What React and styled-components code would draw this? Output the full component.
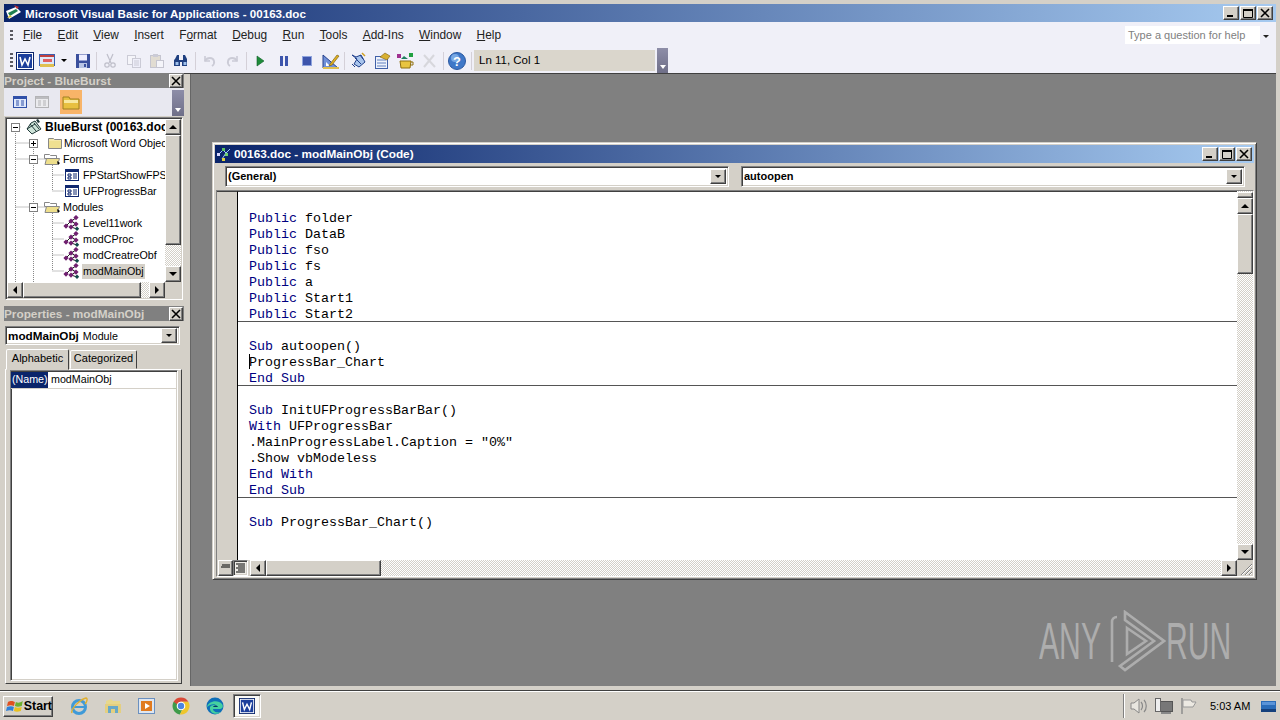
import React from "react";
import styled, { createGlobalStyle, css } from "styled-components";

const GlobalStyle = createGlobalStyle`
  html, body { margin: 0; padding: 0; }
  body { width: 1280px; height: 720px; overflow: hidden; background: #d4d0c8; }
  * { box-sizing: border-box; }
`;

const raised = css`
  border: 1px solid;
  border-color: #fff #404040 #404040 #fff;
  box-shadow: inset -1px -1px #808080;
`;
const sunken = css`
  border: 1px solid;
  border-color: #808080 #fff #fff #808080;
  box-shadow: inset 1px 1px #404040, inset -1px -1px #d4d0c8;
`;
const dither = css`
  background: repeating-conic-gradient(#d4d0c8 0 25%, #fff 0 50%) 0 0 / 2px 2px;
`;

const Page = styled.div`
  width: 1280px;
  height: 720px;
  display: flex;
  flex-direction: column;
  background: #d4d0c8;
  font-family: "Liberation Sans", Arial, sans-serif;
  font-size: 12px;
  color: #000;
  overflow: hidden;
`;
const AppWindow = styled.div`
  height: 692px;
  flex: none;
  margin-top: -1px;
  padding: 4px 4px 4px;
  display: flex;
  flex-direction: column;
  border-top: 1px solid #fff;
  border-bottom: 1px solid #404040;
`;
const TitleBar = styled.div`
  height: 18px;
  flex: none;
  display: flex;
  align-items: center;
  gap: 2px;
  padding: 0 ${({ $pr }) => $pr}px 0 1px;
  background: linear-gradient(90deg, #0a246a, #a6caf0);
`;
const TitleText = styled.span`
  flex: 1;
  color: #fff;
  font-weight: bold;
  font-size: ${({ $size }) => $size}px;
  white-space: nowrap;
`;
const WinButtons = styled.div`
  display: flex;
  gap: ${({ $gap }) => $gap}px;
`;
const WinButton = styled.div`
  width: 16px;
  height: 14px;
  background: #d4d0c8;
  ${raised};
  display: flex;
  align-items: center;
  justify-content: center;
`;
const MenuBar = styled.div`
  height: 26px;
  flex: none;
  display: flex;
  align-items: center;
  gap: 15.3px;
  padding: 0 0 0 6px;
  background: #f0f0f8;
  font-size: 11.9px;
`;
const Grip = styled.div`
  width: 3px;
  flex: none;
  height: ${({ $h }) => $h}px;
  background: repeating-linear-gradient(180deg, #5a5a62 0 2px, transparent 2px 4px);
  margin-right: ${({ $mr }) => $mr}px;
`;
const MenuItem = styled.span`
  white-space: nowrap;
  color: #222;
`;
const HelpBox = styled.div`
  margin-left: auto;
  width: 135px;
  height: 18px;
  background: #fff;
  color: #808080;
  padding-left: 3px;
  line-height: 18px;
  font-size: 11px;
`;
const HelpArrow = styled.div`
  width: 0;
  height: 0;
  margin: 2px 7px 0 -12.3px;
  border: 3px solid transparent;
  border-top: 3px solid #222;
  border-bottom: 0;
`;
const ToolBar = styled.div`
  height: 25px;
  flex: none;
  display: flex;
  align-items: center;
  padding-left: 6px;
  background: #f0f0f8;
`;
const ToolButton = styled.div`
  width: ${({ $w }) => $w || 23.5}px;
  height: 22px;
  flex: none;
  display: flex;
  align-items: center;
  justify-content: center;
  opacity: ${({ $off }) => ($off ? 0.35 : 1)};
`;
const ToolSep = styled.div`
  width: 1px;
  height: 18px;
  flex: none;
  margin: 0 ${({ $m }) => $m ?? 3}px;
  background: #d4d0d8;
`;
const PositionBox = styled.div`
  width: 181px;
  height: 21px;
  flex: none;
  background: #dad6cc;
  padding-left: 5px;
  line-height: 21px;
  font-size: 11.5px;
`;
const ChevronEnd = styled.div`
  width: 11px;
  height: 25px;
  flex: none;
  margin-left: 2px;
  background: linear-gradient(180deg, #8e8ea8, #6f6f88);
  position: relative;
  &::after {
    content: "";
    position: absolute;
    left: 3px;
    bottom: 4px;
    border: 3px solid transparent;
    border-top: 4px solid #fff;
    border-bottom: 0;
  }
`;
const Main = styled.div`
  flex: 1;
  min-height: 0;
  display: flex;
  border-top: 1px solid #404040;
`;
const Sidebar = styled.div`
  width: 180px;
  flex: none;
  margin-top: -1px;
  display: flex;
  flex-direction: column;
`;
const Workspace = styled.div`
  flex: 1;
  margin-left: 6px;
  background: #808080;
  border-left: 1px solid #666;
  position: relative;
`;
const PanelTitle = styled.div`
  height: 15px;
  flex: none;
  display: flex;
  align-items: center;
  justify-content: space-between;
  padding-right: 1px;
  background: #808080;
  color: #d4d0c8;
  font-weight: bold;
  font-size: 11.8px;
`;
const PanelClose = styled.div`
  width: 14px;
  height: 14px;
  background: #d4d0c8;
  ${raised};
  display: flex;
  align-items: center;
  justify-content: center;
`;
const ProjectBar = styled.div`
  height: 28px;
  flex: none;
  display: flex;
  align-items: center;
  padding-left: 5px;
  background: #e8e8f0;
  position: relative;
`;
const ProjectButton = styled.div`
  width: 22px;
  height: ${({ $active }) => ($active ? 24 : 22)}px;
  margin-left: ${({ $active }) => ($active ? 7 : 0)}px;
  display: flex;
  align-items: center;
  justify-content: center;
  background: ${({ $active }) => ($active ? "#f8b468" : "transparent")};
  opacity: ${({ $off }) => ($off ? 0.55 : 1)};
`;
const ProjectChevron = styled(ChevronEnd)`
  position: absolute;
  right: 0;
  top: 2px;
  width: 12px;
  height: 26px;
  margin: 0;
`;
const TreePanel = styled.div`
  height: 183px;
  flex: none;
  margin: 1px 1px 0 1px;
  ${sunken};
  padding: 1px;
  position: relative;
  display: grid;
  grid-template-columns: 1fr 16px;
  grid-template-rows: 1fr 16px;
  background: #fff;
`;
const TreeBody = styled.div`
  overflow: hidden;
  position: relative;
`;
const TreeLines = styled.svg`
  position: absolute;
  left: 0;
  top: 0;
`;
const TreeRow = styled.div`
  position: relative;
  height: 16px;
  display: flex;
  align-items: center;
  white-space: nowrap;
  padding-left: ${({ $level }) => [4, 22, 56][$level]}px;
  font-weight: ${({ $root }) => ($root ? "bold" : "normal")};
  font-size: ${({ $root }) => ($root ? 12 : 10.7)}px;
`;
const Expander = styled.div`
  width: 9px;
  height: 9px;
  flex: none;
  border: 1px solid #808080;
  background: #fff;
  margin-right: ${({ $mr }) => $mr}px;
  position: relative;
  &::before {
    content: "";
    position: absolute;
    left: 1px;
    top: 3px;
    width: 5px;
    height: 1px;
    background: #000;
  }
  ${({ $plus }) =>
    $plus &&
    css`
      &::after {
        content: "";
        position: absolute;
        left: 3px;
        top: 1px;
        width: 1px;
        height: 5px;
        background: #000;
      }
    `}
`;
const TreeIcon = styled.div`
  width: 18px;
  height: 16px;
  flex: none;
  margin-right: ${({ $mr }) => $mr ?? 2}px;
  display: flex;
  align-items: center;
  justify-content: center;
`;
const TreeLabel = styled.span`
  padding: 0 1px;
  margin-left: -1px;
  line-height: 15px;
  background: ${({ $selected }) => ($selected ? "#d4d0c8" : "transparent")};
`;
const ScrollV = styled.div`
  display: flex;
  flex-direction: column;
  ${dither};
`;
const ScrollH = styled.div`
  display: flex;
  ${dither};
`;
const ScrollButton = styled.div`
  width: ${({ $w }) => $w || 16}px;
  height: ${({ $h }) => $h || 16}px;
  flex: none;
  background: #d4d0c8;
  ${raised};
  display: flex;
  align-items: center;
  justify-content: center;
`;
const Arrow = styled.div`
  width: 0;
  height: 0;
  border: ${({ $size }) => $size || 4}px solid transparent;
  ${({ $dir }) =>
    ({
      up: "border-bottom-color: #000; border-top: 0;",
      down: "border-top-color: #000; border-bottom: 0;",
      left: "border-right-color: #000; border-left: 0;",
      right: "border-left-color: #000; border-right: 0;",
    })[$dir]}
`;
const Thumb = styled.div`
  flex: none;
  width: ${({ $w }) => ($w ? `${$w}px` : "100%")};
  height: ${({ $h }) => ($h ? `${$h}px` : "100%")};
  background: #d4d0c8;
  ${raised};
`;
const Spacer = styled.div`
  flex: 1;
`;
const Corner = styled.div`
  background: #d4d0c8;
`;
const PropsPanel = styled.div`
  flex: 1;
  min-height: 0;
  margin-top: 6px;
  display: flex;
  flex-direction: column;
`;
const Combo = styled.div`
  height: 19px;
  flex: none;
  margin: 5px 4px 0 1px;
  ${sunken};
  background: #fff;
  display: flex;
  align-items: center;
  justify-content: space-between;
  padding: 0 2px 0 2px;
  white-space: nowrap;
`;
const ComboText = styled.span`
  font-weight: ${({ $bold }) => ($bold ? "bold" : "normal")};
  font-size: ${({ $bold }) => ($bold ? 11.7 : 10.7)}px;
  margin-right: ${({ $bold }) => ($bold ? 4 : 0)}px;
`;
const ComboLabel = styled.div`
  flex: 1;
`;
const ComboButton = styled(ScrollButton)`
  width: 16px;
  height: 15px;
`;
const Tabs = styled.div`
  height: 21px;
  flex: none;
  margin-top: 3px;
  padding-left: 2px;
  display: flex;
  align-items: flex-end;
`;
const Tab = styled.div`
  height: ${({ $active }) => ($active ? 21 : 19)}px;
  width: ${({ $w }) => $w}px;
  padding-top: ${({ $active }) => ($active ? 1 : 0)}px;
  margin-left: ${({ $active }) => ($active ? 0 : 1)}px;
  text-align: center;
  font-size: 11px;
  line-height: 14px;
  background: #d4d0c8;
  border: 1px solid;
  border-color: #fff #404040 transparent #fff;
  border-radius: 2px 2px 0 0;
  position: relative;
  ${({ $active }) => $active && "margin-bottom: -1px; z-index: 1;"}
`;
const TabPanel = styled.div`
  flex: 1;
  min-height: 0;
  margin: 0 2px 2px 1px;
  padding: 0 3px 2px 4px;
  border: 1px solid;
  border-color: #fff #404040 #404040 #fff;
`;
const PropGrid = styled.div`
  height: 100%;
  background: #fff;
  ${sunken};
  padding: 1px 0 0;
`;
const PropRow = styled.div`
  height: 17px;
  display: grid;
  grid-template-columns: 37px 1fr;
  border-bottom: 1px solid #d4d0c8;
  font-size: 10.7px;
  line-height: 15px;
`;
const PropName = styled.div`
  background: #0a246a;
  color: #fff;
  padding-left: 1px;
`;
const PropValue = styled.div`
  padding-left: 3px;
`;

/* code window */
const CodeWindow = styled.div`
  position: absolute;
  left: 21px;
  top: 68px;
  width: 1045px;
  height: 438px;
  background: #d4d0c8;
  border: 1px solid;
  border-color: #d4d0c8 #404040 #404040 #d4d0c8;
  box-shadow: inset 1px 1px #fff, inset -1px -1px #808080;
  padding: 2px;
  display: flex;
  flex-direction: column;
`;
const ComboRow = styled.div`
  height: 27px;
  flex: none;
  display: grid;
  grid-template-columns: 504px 504px;
  gap: 12px;
  padding: 3px 0 3px 10px;
`;
const CodeCombo = styled(Combo)`
  height: 21px;
  margin: 0;
  font-weight: bold;
  font-size: 11px;
  padding-bottom: 1px;
`;
const CodeFrame = styled.div`
  flex: 1;
  min-height: 0;
  margin-left: 1px;
  ${sunken};
  display: grid;
  grid-template-columns: 21px 1fr 16px;
  grid-template-rows: 1fr 16px;
`;
const MarginBar = styled.div`
  background: #d4d0c8;
  border-right: 1px solid #000;
  border-top: 1px solid #404040;
`;
const CodeArea = styled.div`
  background: #fff;
  overflow: hidden;
  padding-top: 2px;
  border-top: 1px solid #404040;
  font-family: "Liberation Mono", "Courier New", monospace;
  font-size: 13.33px;
  color: #000;
`;
const CodeLine = styled.div`
  height: 16px;
  line-height: 18px;
  padding-left: 11px;
  white-space: pre;
  ${({ $sep }) => $sep && "box-shadow: inset 0 -1px #555;"}
`;
const Keyword = styled.span`
  color: #000080;
`;
const Caret = styled.span`
  display: inline-block;
  width: 1px;
  height: 15px;
  margin-right: -1px;
  vertical-align: top;
  background: #000;
`;
const SplitStub = styled.div`
  height: 6px;
  flex: none;
  margin-top: 1px;
  background: #d4d0c8;
  ${raised};
`;
const ViewButtons = styled.div`
  grid-column: 1;
  display: flex;
  background: #d4d0c8;
  margin-right: -12px;
  position: relative;
  z-index: 1;
  padding-left: 1px;
`;
const ViewButton = styled.div`
  width: 15px;
  height: 16px;
  flex: none;
  display: flex;
  align-items: center;
  justify-content: center;
  ${({ $on }) => ($on ? sunken : raised)};
  background: ${({ $on }) => ($on ? "#f0eee8" : "#d4d0c8")};
`;
const CodeHScroll = styled(ScrollH)`
  padding-left: 12px;
`;
const ResizeGrip = styled.div`
  background: #d4d0c8;
  display: flex;
  align-items: flex-end;
  justify-content: flex-end;
`;
const Watermark = styled.div`
  position: absolute;
  right: 47px;
  bottom: 14px;
  display: flex;
  align-items: center;
  gap: 5px;
  color: #adadad;
  font-size: 52px;
  line-height: 60px;
`;
const WatermarkWord = styled.span`
  display: block;
  width: 63px;
  white-space: nowrap;
  transform: scaleX(0.58);
  transform-origin: left center;
`;
const LogoSlot = styled.div`
  display: flex;
  margin: 0 -5px 0 3px;
`;

/* taskbar */
const Taskbar = styled.div`
  flex: 1;
  display: flex;
  align-items: center;
  padding: 0 0 0 3px;
  border-top: 1px solid #fff;
  background: #d4d0c8;
`;
const StartButton = styled.div`
  width: 50px;
  height: 21px;
  ${raised};
  display: flex;
  align-items: center;
  padding-left: 2px;
  font-weight: bold;
  font-size: 12.4px;
  margin-right: 9px;
`;
const TaskIcon = styled.div`
  width: 34px;
  height: 24px;
  flex: none;
  display: flex;
  align-items: center;
  justify-content: center;
`;
const TaskActive = styled.div`
  width: 28px;
  height: 24px;
  flex: none;
  margin-left: 1px;
  background: #fbfaf6;
  ${sunken};
  display: flex;
  align-items: center;
  justify-content: center;
`;
const Tray = styled.div`
  margin-left: auto;
  width: 157px;
  height: 24px;
  display: flex;
  align-items: center;
  padding-left: 5px;
  gap: 5px;
  border-left: 1px solid #808080;
  box-shadow: inset 1px 0 #fff;
`;
const Clock = styled.span`
  margin: 0 6px;
  font-size: 11px;
  white-space: nowrap;
`;

/* drawings */
const Svg = ({ s = 16, w, h, children }) => (
  <svg width={w || s} height={h || s} viewBox={`0 0 ${w || s} ${h || s}`}>
    {children}
  </svg>
);
const WordIcon = ({ s = 18 }) => (
  <svg width={s} height={s} viewBox="0 0 18 18">
    <rect x="0.5" y="0.5" width="17" height="17" fill="#fff" stroke="#0a246a" />
    <rect x="2" y="2" width="14" height="14" fill="#1c3f9c" />
    <path d="M4 5l2 8 3-6 3 6 2-8" fill="none" stroke="#fff" strokeWidth="1.6" />
  </svg>
);
const ViewDocIcon = () => (
  <Svg w={16} h={16}>
    <rect x="0.5" y="1.5" width="15" height="11" fill="#dfe8f8" stroke="#3a5fb0" />
    <rect x="1" y="2" width="14" height="2" fill="#c04040" />
    <rect x="4" y="6" width="9" height="3" fill="#e06060" />
    <rect x="1" y="11" width="14" height="3" fill="#e0c050" />
  </Svg>
);
const SaveIcon = () => (
  <Svg>
    <path d="M1 1h14v14H1z" fill="#3a4f9c" />
    <rect x="4" y="1.5" width="8" height="6" fill="#eef" />
    <rect x="4" y="10" width="8" height="5" fill="#b8c4e4" />
    <rect x="9" y="11" width="2" height="3" fill="#3a4f9c" />
  </Svg>
);
const CutIcon = () => (
  <Svg>
    <path d="M5 1l4 9M11 1L7 10" stroke="#667" strokeWidth="1.2" fill="none" />
    <circle cx="5" cy="12" r="2.2" fill="none" stroke="#667" strokeWidth="1.2" />
    <circle cx="11" cy="12" r="2.2" fill="none" stroke="#667" strokeWidth="1.2" />
  </Svg>
);
const CopyIcon = () => (
  <Svg>
    <rect x="1.5" y="2.5" width="8" height="9" fill="#fff" stroke="#889" />
    <rect x="6.5" y="5.5" width="8" height="9" fill="#eef" stroke="#889" />
    <path d="M8 8h5M8 10h5M8 12h5" stroke="#889" />
  </Svg>
);
const PasteIcon = () => (
  <Svg>
    <rect x="1.5" y="2.5" width="10" height="12" fill="#c8b88c" stroke="#778" />
    <rect x="4" y="1" width="5" height="3" fill="#889" />
    <rect x="7.5" y="7.5" width="7" height="7" fill="#fff" stroke="#778" />
  </Svg>
);
const FindIcon = () => (
  <Svg>
    <path d="M2 6l2-4h2v5h4V2h2l2 4v7H9V9H7v4H1V7z" fill="#1f3f80" />
    <rect x="2.5" y="9" width="3" height="3" fill="#9fc0ea" />
    <rect x="10.5" y="9" width="3" height="3" fill="#9fc0ea" />
  </Svg>
);
const UndoIcon = ({ flip }) => (
  <Svg>
    <g transform={flip ? "translate(16 0) scale(-1 1)" : undefined}>
      <path d="M4 3v5h5" fill="none" stroke="#889" strokeWidth="1.6" />
      <path d="M4 8c2-4 8-4 9 0 .5 2-.5 4-2 5" fill="none" stroke="#889" strokeWidth="1.8" />
    </g>
  </Svg>
);
const PlayIcon = () => (
  <Svg>
    <path d="M5 3l7 5-7 5z" fill="#1e8c3a" stroke="#10602a" strokeWidth=".6" />
  </Svg>
);
const PauseIcon = () => (
  <Svg>
    <rect x="4" y="3" width="3" height="10" fill="#3d55ac" />
    <rect x="9" y="3" width="3" height="10" fill="#3d55ac" />
  </Svg>
);
const StopIcon = () => (
  <Svg>
    <rect x="3.5" y="3.5" width="9" height="9" fill="#3d55ac" stroke="#8fa4de" />
  </Svg>
);
const DesignIcon = () => (
  <Svg w={18} h={18}>
    <path d="M1 3v13h15z" fill="#7090d8" stroke="#24408c" />
    <path d="M4 10v4h4z" fill="#fff" />
    <path d="M8 12l7-9 2 1-7 9-3 1z" fill="#e0b020" stroke="#70580c" strokeWidth=".6" />
    <rect x="1" y="15" width="16" height="2" fill="#e0c050" />
  </Svg>
);
const ProjectExplorerIcon = () => (
  <Svg w={18} h={18}>
    <path d="M3 3l5 4-3 5 5 3 6-5-4-7-5 2z" fill="#a8c4ec" stroke="#20408c" />
    <path d="M3 12l3 3M11 3l3 4M6 6l6 6" stroke="#20408c" fill="none" />
    <path d="M13 1l3 3" stroke="#d0a020" strokeWidth="1.5" />
  </Svg>
);
const PropertiesIcon = () => (
  <Svg w={18} h={18}>
    <rect x="2.5" y="4.5" width="12" height="12" fill="#eef2fb" stroke="#4060a8" />
    <path d="M4 8h9M4 11h9M4 14h9" stroke="#6080c0" />
    <path d="M7 5l5-4 5 3-3 4z" fill="#d8b030" stroke="#806010" strokeWidth=".6" />
  </Svg>
);
const ObjectBrowserIcon = () => (
  <Svg w={18} h={18}>
    <rect x="1" y="2" width="4" height="4" fill="#a03090" />
    <rect x="13" y="1" width="4" height="4" fill="#20a040" />
    <path d="M8 4l-3 3h7z" fill="#208060" />
    <path d="M4 9h11l-1 7H5z" fill="#e8c440" stroke="#907010" />
    <path d="M15 10h2v3h-2" fill="none" stroke="#907010" />
  </Svg>
);
const ToolsIcon = () => (
  <Svg>
    <path d="M3 2l11 12M13 2L3 14" stroke="#aaa" strokeWidth="2" />
  </Svg>
);
const HelpIcon = () => (
  <Svg w={18} h={18}>
    <circle cx="9" cy="9" r="8.5" fill="#3f78c8" stroke="#2a58a0" />
    <circle cx="7" cy="6" r="4" fill="#78a8e4" />
    <text x="9" y="13.5" fontSize="13" fontWeight="bold" textAnchor="middle" fill="#fff" fontFamily="Liberation Sans">
      ?
    </text>
  </Svg>
);
const ClassIcon = ({ off }) => (
  <Svg>
    <rect x="1.5" y="2.5" width="13" height="11" fill={off ? "#eee" : "#dfe8fb"} stroke={off ? "#888" : "#3050a8"} />
    <rect x="2" y="3" width="12" height="2" fill={off ? "#999" : "#3050a8"} />
    <path d="M4 7h3M4 9h3M4 11h3M9 7h3M9 9h3M9 11h3" stroke={off ? "#888" : "#3050a8"} />
  </Svg>
);
const FolderBig = () => (
  <Svg w={18} h={16}>
    <path d="M1 3h6l1 2h9v10H1z" fill="#e8c040" stroke="#a08020" />
    <rect x="2" y="6" width="14" height="3" fill="#f8e8a0" />
  </Svg>
);
const FolderClosed = () => (
  <Svg w={16} h={16}>
    <path d="M1.5 3.5h5l1 1h7v9h-13z" fill="#f5e8a8" stroke="#888" />
    <path d="M2 6h12v7H2z" fill="#efe090" />
  </Svg>
);
const FolderOpen = () => (
  <Svg w={18} h={16}>
    <path d="M1.5 3.5h5l1 1h6v3h-12z" fill="#fff" stroke="#888" />
    <path d="M2 13.5l1.5-6h13l-2 6z" fill="#eedf8c" stroke="#888" />
    <path d="M14 10l3 2-2 2" fill="#000" />
  </Svg>
);
const FormIcon = () => (
  <Svg>
    <rect x="1.5" y="2.5" width="13" height="11" fill="#fff" stroke="#102870" />
    <rect x="2" y="3" width="12" height="2" fill="#102870" />
    <path d="M4 7h3v2H4zM4 10h3v2H4z" fill="none" stroke="#102870" />
    <path d="M9 7h4M9 9h4M9 11h4" stroke="#102870" />
  </Svg>
);
const ModuleIcon = () => (
  <Svg w={18} h={16}>
    <path d="M3 11l5-5 5-3M8 6l5 3M8 12l5-3M8 12l6 2" stroke="#222" fill="none" />
    <path d="M13 0l2.6 2.6L13 5.2l-2.6-2.6zM8 3.5l2.6 2.6L8 8.7 5.4 6.1zM13 6.5l2.6 2.6-2.6 2.6-2.6-2.6z" fill="#702070" />
    <path d="M3 8.5l2.6 2.6L3 13.7.4 11.1zM8 9.5l2.6 2.6L8 14.7l-2.6-2.6z" fill="#702070" />
    <path d="M14 11.5l2.2 2.2-2.2 2.2-2.2-2.2z" fill="#104848" />
  </Svg>
);
const ProjectTreeIcon = () => (
  <Svg w={18} h={16}>
    <path d="M2 10l5 5 9-5-6-8-4 2z" fill="#cde3d8" stroke="#203838" />
    <path d="M5 5l6 7M9 4l5 6M2 10l8-5" stroke="#203838" fill="none" />
    <path d="M11 1l2-1 2 3-2 1z" fill="#203838" />
  </Svg>
);
const CodeWindowIcon = () => (
  <Svg>
    <path d="M2 9l5-5 3 3 4-4M6 13l4-6" stroke="#9ec8ff" fill="none" />
    <rect x="6" y="2" width="3" height="3" fill="#5cc060" />
    <rect x="1" y="7" width="3" height="3" fill="#d8d8ff" />
    <rect x="9" y="7" width="3" height="3" fill="#70d070" />
    <rect x="6" y="12" width="3" height="3" fill="#e0d040" />
  </Svg>
);
const AppTitleIcon = () => (
  <Svg w={18} h={18}>
    <path d="M1 7l10-4 5 5-12 7z" fill="#fff" />
    <path d="M3 9l8-4 2 2-8 5z" fill="#208050" />
    <path d="M9 1l5 2-2 2z" fill="#c03030" />
    <path d="M2 14l3-3 2 2z" fill="#e0c030" />
  </Svg>
);
const MinGlyph = () => (
  <Svg w={10} h={10}>
    <rect x="1" y="7" width="6" height="2" fill="#000" />
  </Svg>
);
const MaxGlyph = () => (
  <Svg w={10} h={10}>
    <path d="M0.5 1.5h9v8h-9z" fill="none" stroke="#000" />
    <rect x="0" y="1" width="10" height="2" fill="#000" />
  </Svg>
);
const CloseGlyph = () => (
  <Svg w={10} h={10}>
    <path d="M1 1l8 8M9 1l-8 8" stroke="#000" strokeWidth="1.6" />
  </Svg>
);
const ViewLinesIcon = ({ full }) => (
  <Svg w={11} h={10}>
    <path d={full ? "M1 1h9M3 3h7M1 5h9M3 7h7M1 9h9" : "M2 2h8M1 4h9"} stroke="#000" fill="none" />
  </Svg>
);
const GripLines = () => (
  <Svg w={14} h={14}>
    <path d="M13 2L2 13M13 6l-7 7M13 10l-3 3" stroke="#808080" fill="none" />
    <path d="M13 3L3 13M13 7l-6 6M13 11l-2 2" stroke="#fff" fill="none" />
  </Svg>
);
const LogoMark = () => (
  <svg width="56" height="62" viewBox="0 0 56 62">
    <g fill="none" stroke="#adadad" strokeWidth="2.6">
      <path d="M2 52V12c0-3 2-5 5-5" />
      <path d="M15 2l39 29-39 29-5-4 34-25L15 10z" />
      <path d="M17 18l19 13-19 13z" />
    </g>
  </svg>
);
const WindowsFlag = () => (
  <Svg w={18} h={16}>
    <path d="M2 4c3-2 5-1 7 0L8 8C6 7 4 7 1 8z" fill="#e05020" />
    <path d="M10 4c2 1 4 1 7-1l-1 5c-3 1-5 1-7 0z" fill="#6cb030" />
    <path d="M1 9c3-1 5-1 7 0l-1 4c-2-1-4-1-7 0z" fill="#3080d8" />
    <path d="M9 9c2 1 4 1 7 0l-1 4c-3 1-5 1-7 0z" fill="#e8c020" />
  </Svg>
);
const IeIcon = () => (
  <Svg w={20} h={20}>
    <circle cx="10" cy="11" r="6.5" fill="none" stroke="#3f9ad8" strokeWidth="3" />
    <path d="M5 11h10" stroke="#3f9ad8" strokeWidth="2" />
    <path d="M3 17C1 13 12 3 17 2c2 0 1 4-1 6" fill="none" stroke="#e0b030" strokeWidth="1.4" />
  </Svg>
);
const ExplorerIcon = () => (
  <Svg w={20} h={20}>
    <path d="M3 5l5-2 2 2h7v3H3z" fill="#e8d88c" />
    <path d="M2 8h16v9H2z" fill="#e4cf80" />
    <path d="M5 10h10v7h-3v-4H8v4H5z" fill="#68a8c8" />
  </Svg>
);
const PlayerIcon = () => (
  <Svg w={20} h={20}>
    <rect x="1.5" y="2.5" width="16" height="15" fill="#dfe6f0" stroke="#6a90c0" />
    <rect x="4" y="5" width="11" height="10" fill="#e07a20" />
    <path d="M8 7l5 3-5 3z" fill="#fff" />
  </Svg>
);
const ChromeIcon = () => (
  <Svg w={20} h={20}>
    <path d="M10 1.5a8.5 8.5 0 0 1 7.4 4.3H10z" fill="#d94a38" />
    <path d="M2.6 5.8A8.5 8.5 0 0 1 10 1.5v4.3a4.2 4.2 0 0 0-3.7 6.4L5 14z" fill="#d94a38" />
    <path d="M2.6 5.8a8.5 8.5 0 0 0 6.3 12.6l3-6z" fill="#3f9b4a" />
    <path d="M17.4 5.8H10l2 6.6-3.1 6A8.5 8.5 0 0 0 17.4 5.8z" fill="#eec62c" />
    <circle cx="10" cy="10" r="4.3" fill="#fff" />
    <circle cx="10" cy="10" r="3.2" fill="#4a85e0" />
  </Svg>
);
const EdgeIcon = () => (
  <Svg w={20} h={20}>
    <circle cx="10" cy="10" r="8.5" fill="#0f6fb8" />
    <path d="M2 11C3 5 13 3 17 8c2 3 0 5-3 5H8c0 3 5 4 8 3-5 4-12 1-11-5 1-2 5-3 7-1-2-3-7-2-10 1z" fill="#45d0a0" />
    <path d="M8 11c1-2 4-2 5 0z" fill="#083868" />
  </Svg>
);
const SpeakerIcon = () => (
  <Svg w={20} h={18}>
    <path d="M2 6h3l5-4v14l-5-4H2z" fill="#e8e6e0" stroke="#888" />
    <path d="M12 5c2 2 2 6 0 8M15 3c3 3 3 9 0 12" fill="none" stroke="#888" strokeWidth="1.2" />
  </Svg>
);
const NetworkIcon = () => (
  <Svg w={20} h={18}>
    <rect x="5.5" y="4.5" width="13" height="10" fill="#777" stroke="#555" />
    <rect x="1.5" y="1.5" width="5" height="13" fill="#eee" stroke="#666" />
    <path d="M7 16h10" stroke="#888" strokeWidth="2" />
  </Svg>
);
const FlagIcon = () => (
  <Svg w={20} h={18}>
    <path d="M3 1v16" stroke="#888" strokeWidth="1.4" />
    <path d="M4 3h8l1 2h4l-3 5H4z" fill="#ece9e2" stroke="#999" />
  </Svg>
);
const DesktopIcon = () => (
  <Svg w={15} h={11}>
    <rect width="15" height="11" fill="#2a6cb8" />
    <rect y="8" width="15" height="3" fill="#14407c" />
    <path d="M1 1h13v3H1z" fill="#5a94d8" />
  </Svg>
);

const TREE = [
  { level: 0, root: true, exp: "minus", icon: <ProjectTreeIcon />, label: "BlueBurst (00163.doc)", mr: 5, imr: 2 },
  { level: 1, exp: "plus", icon: <FolderClosed />, label: "Microsoft Word Objects", mr: 8, imr: 0 },
  { level: 1, exp: "minus", icon: <FolderOpen />, label: "Forms", mr: 5, imr: 2 },
  { level: 2, icon: <FormIcon />, label: "FPStartShowFPS" },
  { level: 2, icon: <FormIcon />, label: "UFProgressBar" },
  { level: 1, exp: "minus", icon: <FolderOpen />, label: "Modules", mr: 5, imr: 2 },
  { level: 2, icon: <ModuleIcon />, label: "Level11work" },
  { level: 2, icon: <ModuleIcon />, label: "modCProc" },
  { level: 2, icon: <ModuleIcon />, label: "modCreatreObf" },
  { level: 2, icon: <ModuleIcon />, label: "modMainObj", selected: true },
  { level: 1, icon: <FolderClosed />, label: "References", mr: 8, imr: 0 },
];

const CODE = [
  [],
  [["k", "Public"], ["t", " folder"]],
  [["k", "Public"], ["t", " DataB"]],
  [["k", "Public"], ["t", " fso"]],
  [["k", "Public"], ["t", " fs"]],
  [["k", "Public"], ["t", " a"]],
  [["k", "Public"], ["t", " Start1"]],
  [["k", "Public"], ["t", " Start2"], ["sep"]],
  [],
  [["k", "Sub"], ["t", " autoopen()"]],
  [["caret"], ["t", "ProgressBar_Chart"]],
  [["k", "End Sub"], ["sep"]],
  [],
  [["k", "Sub"], ["t", " InitUFProgressBarBar()"]],
  [["k", "With"], ["t", " UFProgressBar"]],
  [["t", '.MainProgressLabel.Caption = "0%"']],
  [["t", ".Show vbModeless"]],
  [["k", "End With"]],
  [["k", "End Sub"], ["sep"]],
  [],
  [["k", "Sub"], ["t", " ProgressBar_Chart()"]],
];

const MENUS = [
  ["", "F", "ile"],
  ["", "E", "dit"],
  ["", "V", "iew"],
  ["", "I", "nsert"],
  ["F", "o", "rmat"],
  ["", "D", "ebug"],
  ["", "R", "un"],
  ["", "T", "ools"],
  ["", "A", "dd-Ins"],
  ["", "W", "indow"],
  ["", "H", "elp"],
];

const App = () => (
  <Page>
    <GlobalStyle />
    <AppWindow>
      <TitleBar $pr={3}>
        <AppTitleIcon />
        <TitleText $size={11.6}>Microsoft Visual Basic for Applications - 00163.doc</TitleText>
        <WinButtons $gap={1}>
          <WinButton><MinGlyph /></WinButton>
          <WinButton><MaxGlyph /></WinButton>
          <WinButton><CloseGlyph /></WinButton>
        </WinButtons>
      </TitleBar>
      <MenuBar>
        <Grip $h={10} $mr={-5.3} />
        {MENUS.map(([pre, key, rest]) => (
          <MenuItem key={pre + key + rest}>
            {pre}
            <u>{key}</u>
            {rest}
          </MenuItem>
        ))}
        <HelpBox>Type a question for help</HelpBox>
        <HelpArrow />
      </MenuBar>
      <ToolBar>
        <Grip $h={16} $mr={0} />
        <ToolButton><WordIcon /></ToolButton>
        <ToolButton $w={20}><ViewDocIcon /></ToolButton>
        <ToolButton $w={15}><Arrow $dir="down" $size={3} /></ToolButton>
        <ToolButton $w={22}><SaveIcon /></ToolButton>
        <ToolSep $m={2} />
        <ToolButton $off><CutIcon /></ToolButton>
        <ToolButton $off><CopyIcon /></ToolButton>
        <ToolButton $off><PasteIcon /></ToolButton>
        <ToolButton><FindIcon /></ToolButton>
        <ToolSep $m={2} />
        <ToolButton $off><UndoIcon /></ToolButton>
        <ToolButton $off><UndoIcon flip /></ToolButton>
        <ToolSep $m={1.5} />
        <ToolButton><PlayIcon /></ToolButton>
        <ToolButton><PauseIcon /></ToolButton>
        <ToolButton><StopIcon /></ToolButton>
        <ToolButton><DesignIcon /></ToolButton>
        <ToolSep $m={1.5} />
        <ToolButton><ProjectExplorerIcon /></ToolButton>
        <ToolButton><PropertiesIcon /></ToolButton>
        <ToolButton><ObjectBrowserIcon /></ToolButton>
        <ToolButton $off><ToolsIcon /></ToolButton>
        <ToolSep $m={2} />
        <ToolButton><HelpIcon /></ToolButton>
        <ToolSep $m={2} />
        <PositionBox>Ln 11, Col 1</PositionBox>
        <ChevronEnd />
      </ToolBar>
      <Main>
        <Sidebar>
          <PanelTitle>
            Project - BlueBurst
            <PanelClose><CloseGlyph /></PanelClose>
          </PanelTitle>
          <ProjectBar>
            <ProjectButton><ClassIcon /></ProjectButton>
            <ProjectButton $off><ClassIcon off /></ProjectButton>
            <ProjectButton $active><FolderBig /></ProjectButton>
            <ProjectChevron />
          </ProjectBar>
          <TreePanel>
            <TreeBody>
              <TreeLines width="160" height="165">
                <path
                  d="M8.5 8v160M8.5 8h6M8.5 24h18M8.5 40h14M8.5 88h14M26.5 24v144M26.5 40h14M45.5 40v32M45.5 56h12M45.5 72h12M26.5 88h14M45.5 88v64M45.5 104h12M45.5 120h12M45.5 136h12M45.5 152h12"
                  stroke="#888"
                  strokeDasharray="1 1"
                  fill="none"
                />
              </TreeLines>
              {TREE.map((n) => (
                <TreeRow key={n.label} $level={n.level} $root={n.root}>
                  {n.exp && <Expander $plus={n.exp === "plus"} $mr={n.mr} />}
                  <TreeIcon $mr={n.imr}>{n.icon}</TreeIcon>
                  <TreeLabel $selected={n.selected}>{n.label}</TreeLabel>
                </TreeRow>
              ))}
            </TreeBody>
            <ScrollV>
              <ScrollButton><Arrow $dir="up" /></ScrollButton>
              <Thumb $h={110} />
              <Spacer />
              <ScrollButton><Arrow $dir="down" /></ScrollButton>
            </ScrollV>
            <ScrollH>
              <ScrollButton><Arrow $dir="left" /></ScrollButton>
              <Thumb $w={118} />
              <Spacer />
              <ScrollButton><Arrow $dir="right" /></ScrollButton>
            </ScrollH>
            <Corner />
          </TreePanel>
          <PropsPanel>
            <PanelTitle>
              Properties - modMainObj
              <PanelClose><CloseGlyph /></PanelClose>
            </PanelTitle>
            <Combo>
              <ComboLabel>
                <ComboText $bold>modMainObj</ComboText>
                <ComboText>Module</ComboText>
              </ComboLabel>
              <ComboButton><Arrow $dir="down" $size={3} /></ComboButton>
            </Combo>
            <Tabs>
              <Tab $active $w={63}>Alphabetic</Tab>
              <Tab $w={67}>Categorized</Tab>
            </Tabs>
            <TabPanel>
              <PropGrid>
                <PropRow>
                  <PropName>(Name)</PropName>
                  <PropValue>modMainObj</PropValue>
                </PropRow>
              </PropGrid>
            </TabPanel>
          </PropsPanel>
        </Sidebar>
        <Workspace>
          <CodeWindow>
            <TitleBar $pr={2}>
              <CodeWindowIcon />
              <TitleText $size={11.8}>00163.doc - modMainObj (Code)</TitleText>
              <WinButtons $gap={1}>
                <WinButton><MinGlyph /></WinButton>
                <WinButton><MaxGlyph /></WinButton>
                <WinButton><CloseGlyph /></WinButton>
              </WinButtons>
            </TitleBar>
            <ComboRow>
              <CodeCombo>
                (General)
                <ComboButton><Arrow $dir="down" $size={3} /></ComboButton>
              </CodeCombo>
              <CodeCombo>
                autoopen
                <ComboButton><Arrow $dir="down" $size={3} /></ComboButton>
              </CodeCombo>
            </ComboRow>
            <CodeFrame>
              <MarginBar />
              <CodeArea>
                {CODE.map((line, i) => (
                  <CodeLine key={i} $sep={line.some(([t]) => t === "sep")}>
                    {line.map(([t, v], j) =>
                      t === "k" ? (
                        <Keyword key={j}>{v}</Keyword>
                      ) : t === "caret" ? (
                        <Caret key={j} />
                      ) : t === "t" ? (
                        <span key={j}>{v}</span>
                      ) : null
                    )}
                  </CodeLine>
                ))}
              </CodeArea>
              <ScrollV>
                <SplitStub />
                <ScrollButton><Arrow $dir="up" /></ScrollButton>
                <Thumb $h={60} />
                <Spacer />
                <ScrollButton><Arrow $dir="down" /></ScrollButton>
              </ScrollV>
              <ViewButtons>
                <ViewButton><ViewLinesIcon /></ViewButton>
                <ViewButton $on><ViewLinesIcon full /></ViewButton>
              </ViewButtons>
              <CodeHScroll>
                <ScrollButton><Arrow $dir="left" /></ScrollButton>
                <Thumb $w={115} />
                <Spacer />
                <ScrollButton><Arrow $dir="right" /></ScrollButton>
              </CodeHScroll>
              <ResizeGrip><GripLines /></ResizeGrip>
            </CodeFrame>
          </CodeWindow>
          <Watermark>
            <WatermarkWord>ANY</WatermarkWord>
            <LogoSlot><LogoMark /></LogoSlot>
            <WatermarkWord>RUN</WatermarkWord>
          </Watermark>
        </Workspace>
      </Main>
    </AppWindow>
    <Taskbar>
      <StartButton>
        <WindowsFlag />
        Start
      </StartButton>
      <TaskIcon><IeIcon /></TaskIcon>
      <TaskIcon><ExplorerIcon /></TaskIcon>
      <TaskIcon><PlayerIcon /></TaskIcon>
      <TaskIcon><ChromeIcon /></TaskIcon>
      <TaskIcon><EdgeIcon /></TaskIcon>
      <TaskActive><WordIcon s={16} /></TaskActive>
      <Tray>
        <SpeakerIcon />
        <NetworkIcon />
        <FlagIcon />
        <Clock>5:03 AM</Clock>
        <DesktopIcon />
      </Tray>
    </Taskbar>
  </Page>
);

export default App;
